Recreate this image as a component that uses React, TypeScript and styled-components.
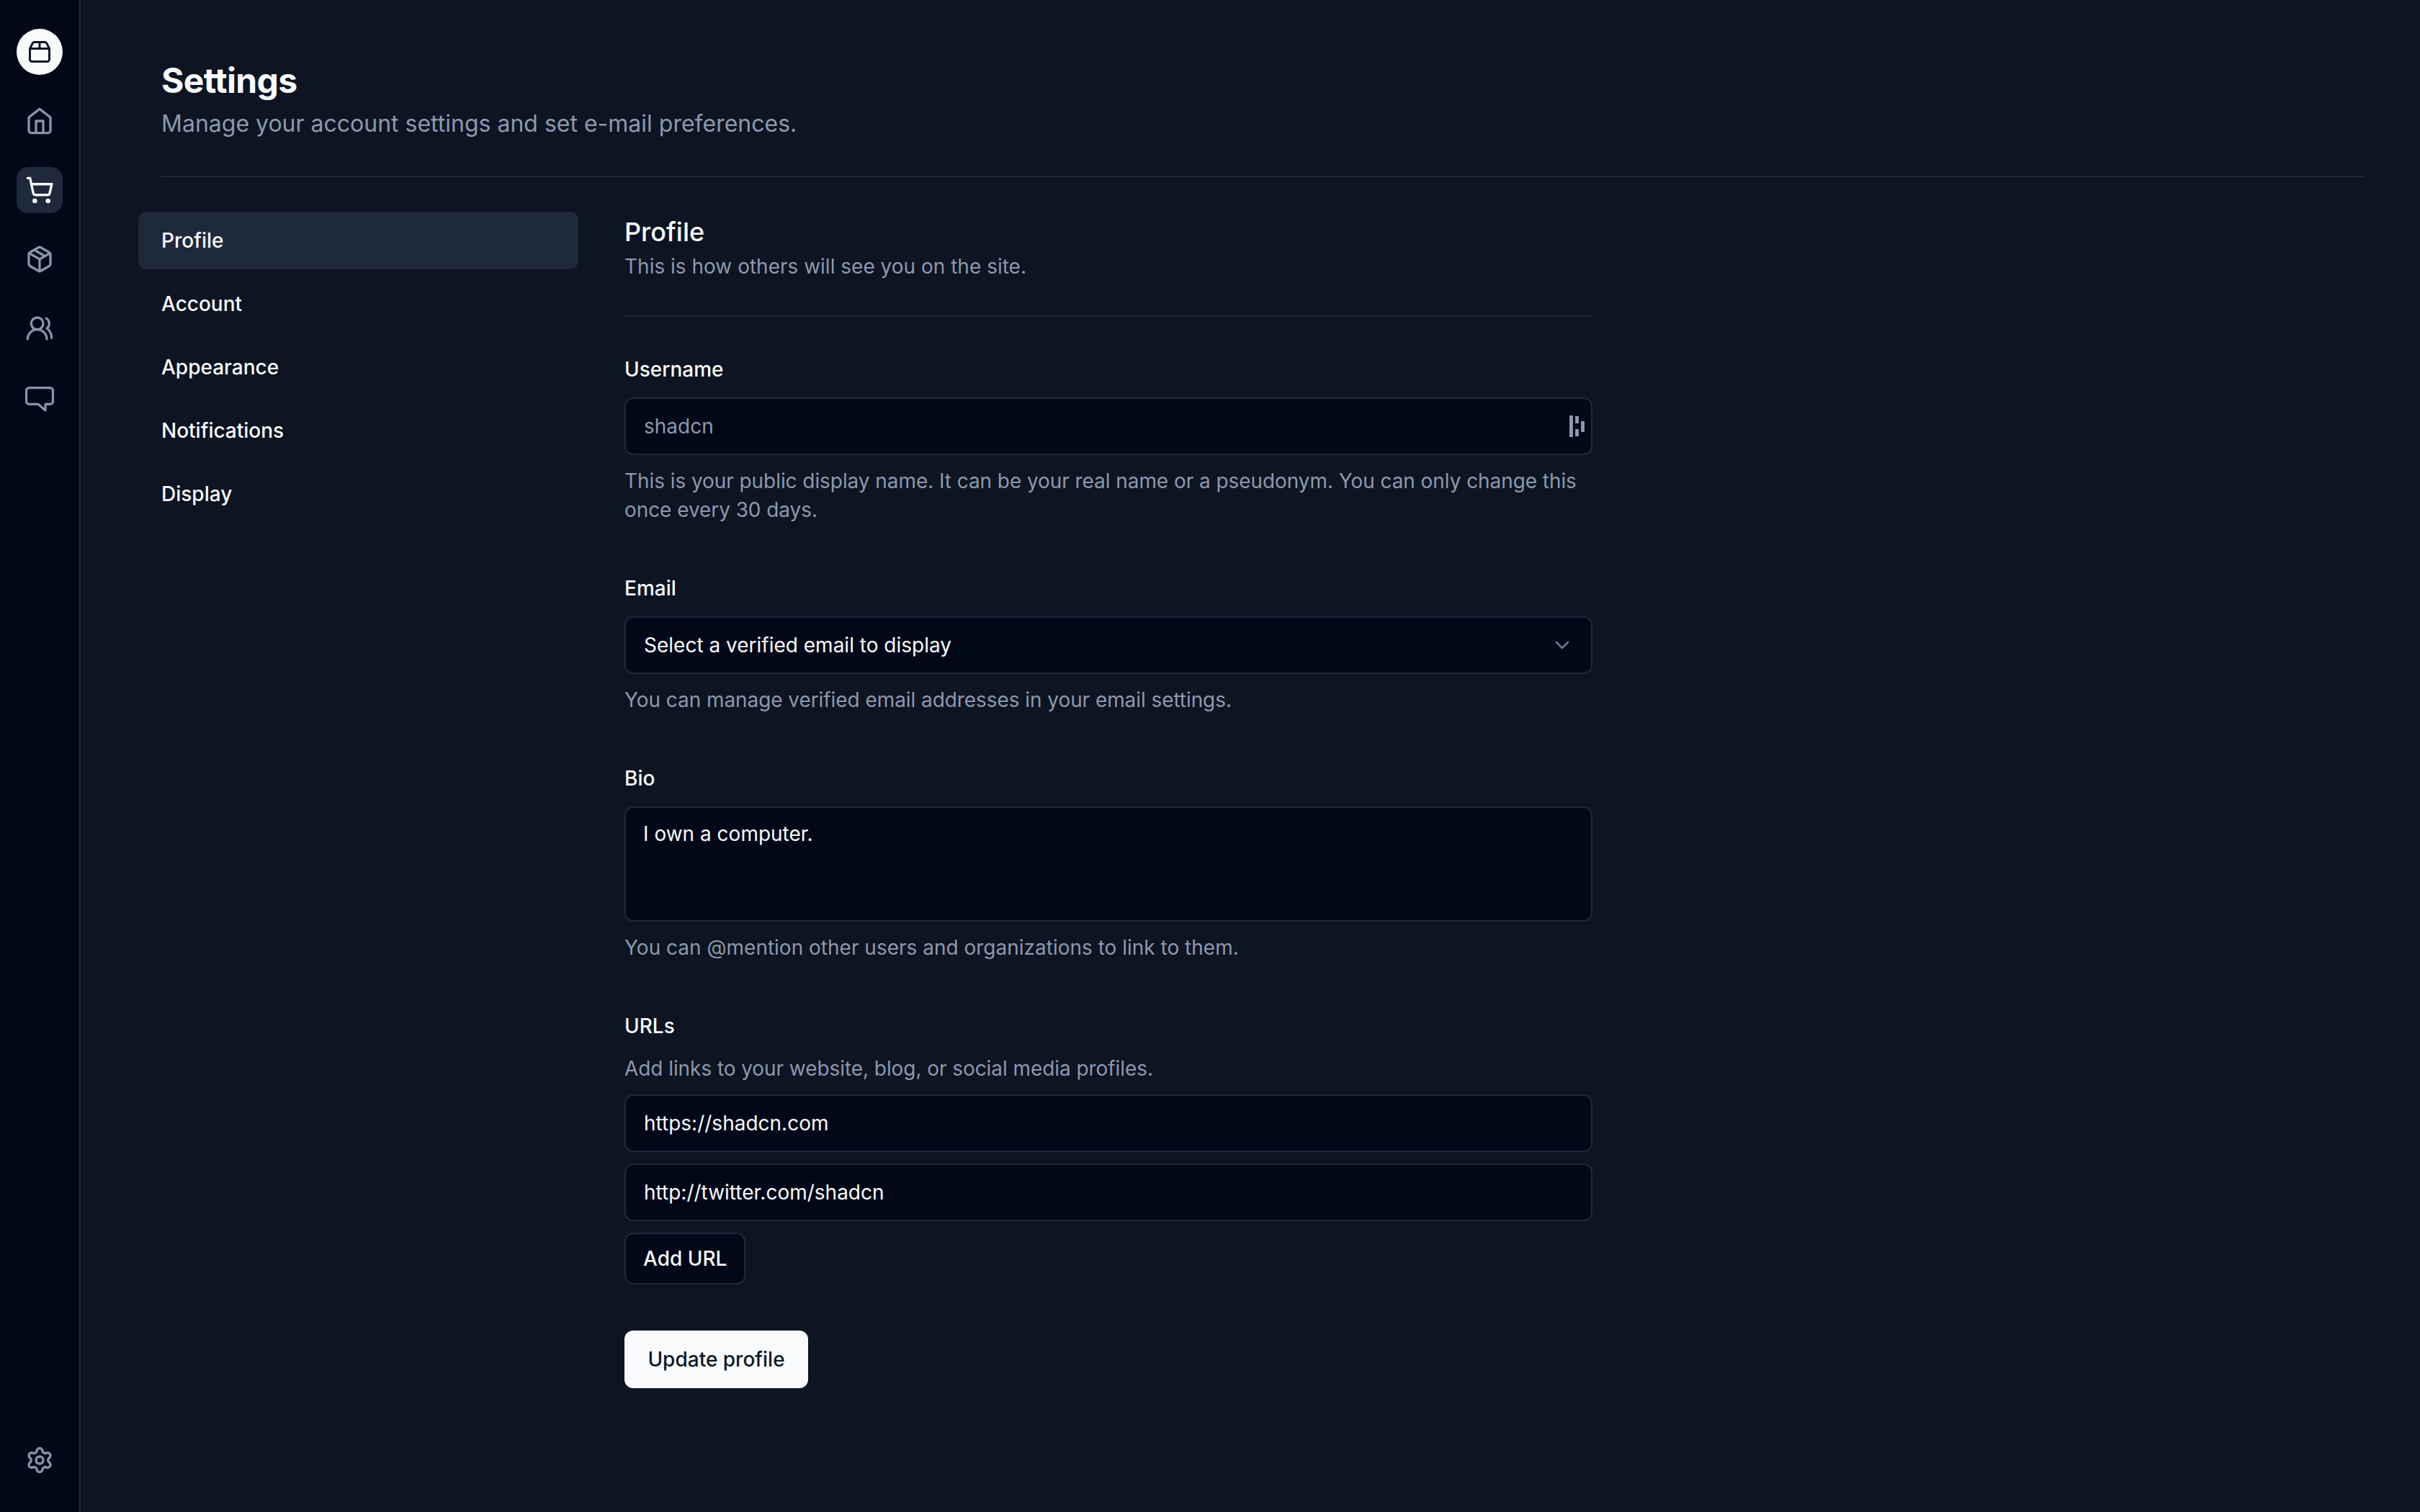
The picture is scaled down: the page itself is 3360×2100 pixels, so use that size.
import React from "react";
import styled, { createGlobalStyle } from "styled-components";
import { Package2, Package, UsersRound, Settings, ChevronDown } from "lucide-react";

const Global = createGlobalStyle`
  html, body { margin: 0; padding: 0; background: #0d1422; }
  * { box-sizing: border-box; }
  body { font-family: Inter, "Liberation Sans", sans-serif; }
`;

const Shell = styled.div`
  display: flex;
  min-height: 100vh;
  background: #0d1422;
  color: #f8fafc;
`;
const Rail = styled.aside`
  width: 112px;
  flex: none;
  background: #020817;
  border-right: 2px solid #1e293b;
  padding: 40px 23px 40px 23px;
  display: flex;
  flex-direction: column;
  justify-content: space-between;
`;
const RailGroup = styled.nav`
  display: flex;
  flex-direction: column;
  gap: 32px;
`;
const RailButton = styled.a<{ $active?: boolean; $brand?: boolean }>`
  width: 64px;
  height: 64px;
  display: flex;
  align-items: center;
  justify-content: center;
  border-radius: ${(p) => (p.$brand ? "50%" : "16px")};
  background: ${(p) => (p.$brand ? "#f8fafc" : p.$active ? "#1e293b" : "transparent")};
  color: ${(p) => (p.$brand ? "#0f172a" : p.$active ? "#f8fafc" : "#8796a9")};
`;
const Main = styled.main`
  flex: 1;
  min-width: 0;
  padding: 76px 78px 0 112px;
`;
const Title = styled.h1`
  margin: 0;
  font-size: 48px;
  line-height: 72px;
  font-weight: 700;
  letter-spacing: -0.65px;
  color: #f8fafc;
`;
const Subtitle = styled.p`
  margin: 0;
  font-size: 32px;
  line-height: 48px;
  color: #8c99ad;
`;
const Rule = styled.hr<{ $top: number; $bottom: number }>`
  border: 0;
  height: 2px;
  background: #1e293b;
  margin: ${(p) => p.$top}px 0 ${(p) => p.$bottom}px;
`;
const Columns = styled.div`
  display: flex;
  gap: 64px;
  margin-left: -32px;
`;
const SideNav = styled.nav`
  width: 611px;
  flex: none;
  display: flex;
  flex-direction: column;
  gap: 8px;
`;
const SideLink = styled.a<{ $active?: boolean }>`
  height: 80px;
  display: flex;
  align-items: center;
  padding: 0 32px;
  border-radius: 12px;
  font-size: 28px;
  font-weight: 500;
  color: #f8fafc;
  background: ${(p) => (p.$active ? "#1e293b" : "transparent")};
`;
const Content = styled.section`
  width: 1344px;
  flex: none;
`;
const SectionTitle = styled.h3`
  margin: 0;
  font-size: 36px;
  line-height: 56px;
  font-weight: 500;
  color: #f8fafc;
`;
const Muted = styled.p<{ $tight?: boolean }>`
  margin: 0;
  font-size: 28px;
  line-height: 40px;
  letter-spacing: ${(p) => (p.$tight ? "-0.07px" : "0")};
  color: #8c99ad;
`;
const Form = styled.form`
  display: flex;
  flex-direction: column;
  gap: 69px;
`;
const Field = styled.div`
  display: flex;
  flex-direction: column;
  gap: 16px;
`;
const Label = styled.label`
  font-size: 28px;
  line-height: 40px;
  font-weight: 500;
  margin-bottom: 3px;
  color: #f8fafc;
`;
const InputBox = styled.div<{ $placeholder?: boolean }>`
  position: relative;
  height: 80px;
  flex: none;
  display: flex;
  align-items: center;
  justify-content: space-between;
  padding: 0 24px 0 25px;
  border: 2px solid #1e293b;
  border-radius: 12px;
  background: #020817;
  font-size: 28px;
  color: ${(p) => (p.$placeholder ? "#8c99ad" : "#f8fafc")};
`;
const TextArea = styled.div`
  height: 160px;
  padding: 16px 24px;
  border: 2px solid #1e293b;
  border-radius: 12px;
  background: #020817;
  font-size: 28px;
  line-height: 40px;
  color: #f8fafc;
`;
const ExtensionMark = styled.svg`
  position: absolute;
  right: 9px;
  top: 23px;
`;
const UrlList = styled.div`
  display: flex;
  flex-direction: column;
  gap: 16px;
`;
const OutlineButton = styled.button`
  align-self: flex-start;
  height: 72px;
  padding: 0 24px;
  border: 2px solid #1e293b;
  border-radius: 12px;
  background: #020817;
  color: #f8fafc;
  font: 500 28px Inter, sans-serif;
`;
const PrimaryButton = styled.button`
  align-self: flex-start;
  width: 255px;
  height: 80px;
  margin-top: -5px;
  padding: 0;
  border: 0;
  border-radius: 12px;
  background: #f8fafc;
  color: #0f172a;
  font: 500 28px Inter, sans-serif;
`;

const HomeIcon = () => (
  <svg width="40" height="40" viewBox="0 0 24 24" fill="none" stroke="currentColor" strokeWidth="2" strokeLinecap="round" strokeLinejoin="round">
    <path d="m3 9 9-7 9 7v11a2 2 0 0 1-2 2H5a2 2 0 0 1-2-2z" />
    <path d="M9 22V12h6v10" />
  </svg>
);

const CartIcon = () => (
  <svg width="40" height="40" viewBox="0 0 24 24" fill="none" stroke="currentColor" strokeWidth="2" strokeLinecap="round" strokeLinejoin="round">
    <circle cx="8" cy="21" r="1" />
    <circle cx="19" cy="21" r="1" />
    <path d="M2.05 2.05h2l2.66 12.42a2 2 0 0 0 2 1.58h9.78a2 2 0 0 0 1.95-1.57l1.65-7.43H5.12" />
  </svg>
);

const ChatIcon = () => (
  <svg width="40" height="40" viewBox="0 0 40 40" fill="none" stroke="currentColor" strokeWidth="3.2" strokeLinejoin="round">
    <path d="M5.5 6.6h29a4 4 0 0 1 4 4v14.8a4 4 0 0 1-4 4H28V38L18 29.4H5.5a4 4 0 0 1-4-4V10.6a4 4 0 0 1 4-4z" />
  </svg>
);

export default function App() {
  return (
    <Shell>
      <Global />
      <Rail>
        <RailGroup>
          <RailButton $brand><Package2 size={36} /></RailButton>
          <RailButton><HomeIcon /></RailButton>
          <RailButton $active><CartIcon /></RailButton>
          <RailButton><Package size={40} /></RailButton>
          <RailButton><UsersRound size={40} /></RailButton>
          <RailButton><ChatIcon /></RailButton>
        </RailGroup>
        <RailGroup>
          <RailButton><Settings size={40} /></RailButton>
        </RailGroup>
      </Rail>
      <Main>
        <Title>Settings</Title>
        <Subtitle>Manage your account settings and set e-mail preferences.</Subtitle>
        <Rule $top={48} $bottom={48} />
        <Columns>
          <SideNav>
            <SideLink $active>Profile</SideLink>
            <SideLink>Account</SideLink>
            <SideLink>Appearance</SideLink>
            <SideLink>Notifications</SideLink>
            <SideLink>Display</SideLink>
          </SideNav>
          <Content>
            <SectionTitle>Profile</SectionTitle>
            <Muted>This is how others will see you on the site.</Muted>
            <Rule $top={48} $bottom={53} />
            <Form>
              <Field>
                <Label>Username</Label>
                <InputBox $placeholder>
                  shadcn
                  <ExtensionMark width="21" height="30" viewBox="0 0 21 30">
                    <defs>
                      <pattern id="dots" width="2" height="2" patternUnits="userSpaceOnUse">
                        <rect width="2" height="2" fill="#94a3b8" />
                        <rect width="1" height="1" fill="#6f7d90" />
                      </pattern>
                    </defs>
                    <g fill="url(#dots)">
                      <rect x="0" y="0" width="5" height="30" />
                      <rect x="8" y="1" width="5" height="10" />
                      <rect x="8" y="19" width="5" height="10" />
                      <rect x="16" y="8" width="5" height="15" />
                    </g>
                  </ExtensionMark>
                </InputBox>
                <Muted $tight>This is your public display name. It can be your real name or a pseudonym. You can only change this once every 30 days.</Muted>
              </Field>
              <Field>
                <Label>Email</Label>
                <InputBox>
                  Select a verified email to display
                  <ChevronDown size={32} color="#687587" />
                </InputBox>
                <Muted $tight>You can manage verified email addresses in your email settings.</Muted>
              </Field>
              <Field>
                <Label>Bio</Label>
                <TextArea>I own a computer.</TextArea>
                <Muted>You can @mention other users and organizations to link to them.</Muted>
              </Field>
              <Field>
                <Label>URLs</Label>
                <Muted $tight>Add links to your website, blog, or social media profiles.</Muted>
                <UrlList>
                  <InputBox>https://shadcn.com</InputBox>
                  <InputBox>http://twitter.com/shadcn</InputBox>
                  <OutlineButton type="button">Add URL</OutlineButton>
                </UrlList>
              </Field>
              <PrimaryButton type="button">Update profile</PrimaryButton>
            </Form>
          </Content>
        </Columns>
      </Main>
    </Shell>
  );
}
